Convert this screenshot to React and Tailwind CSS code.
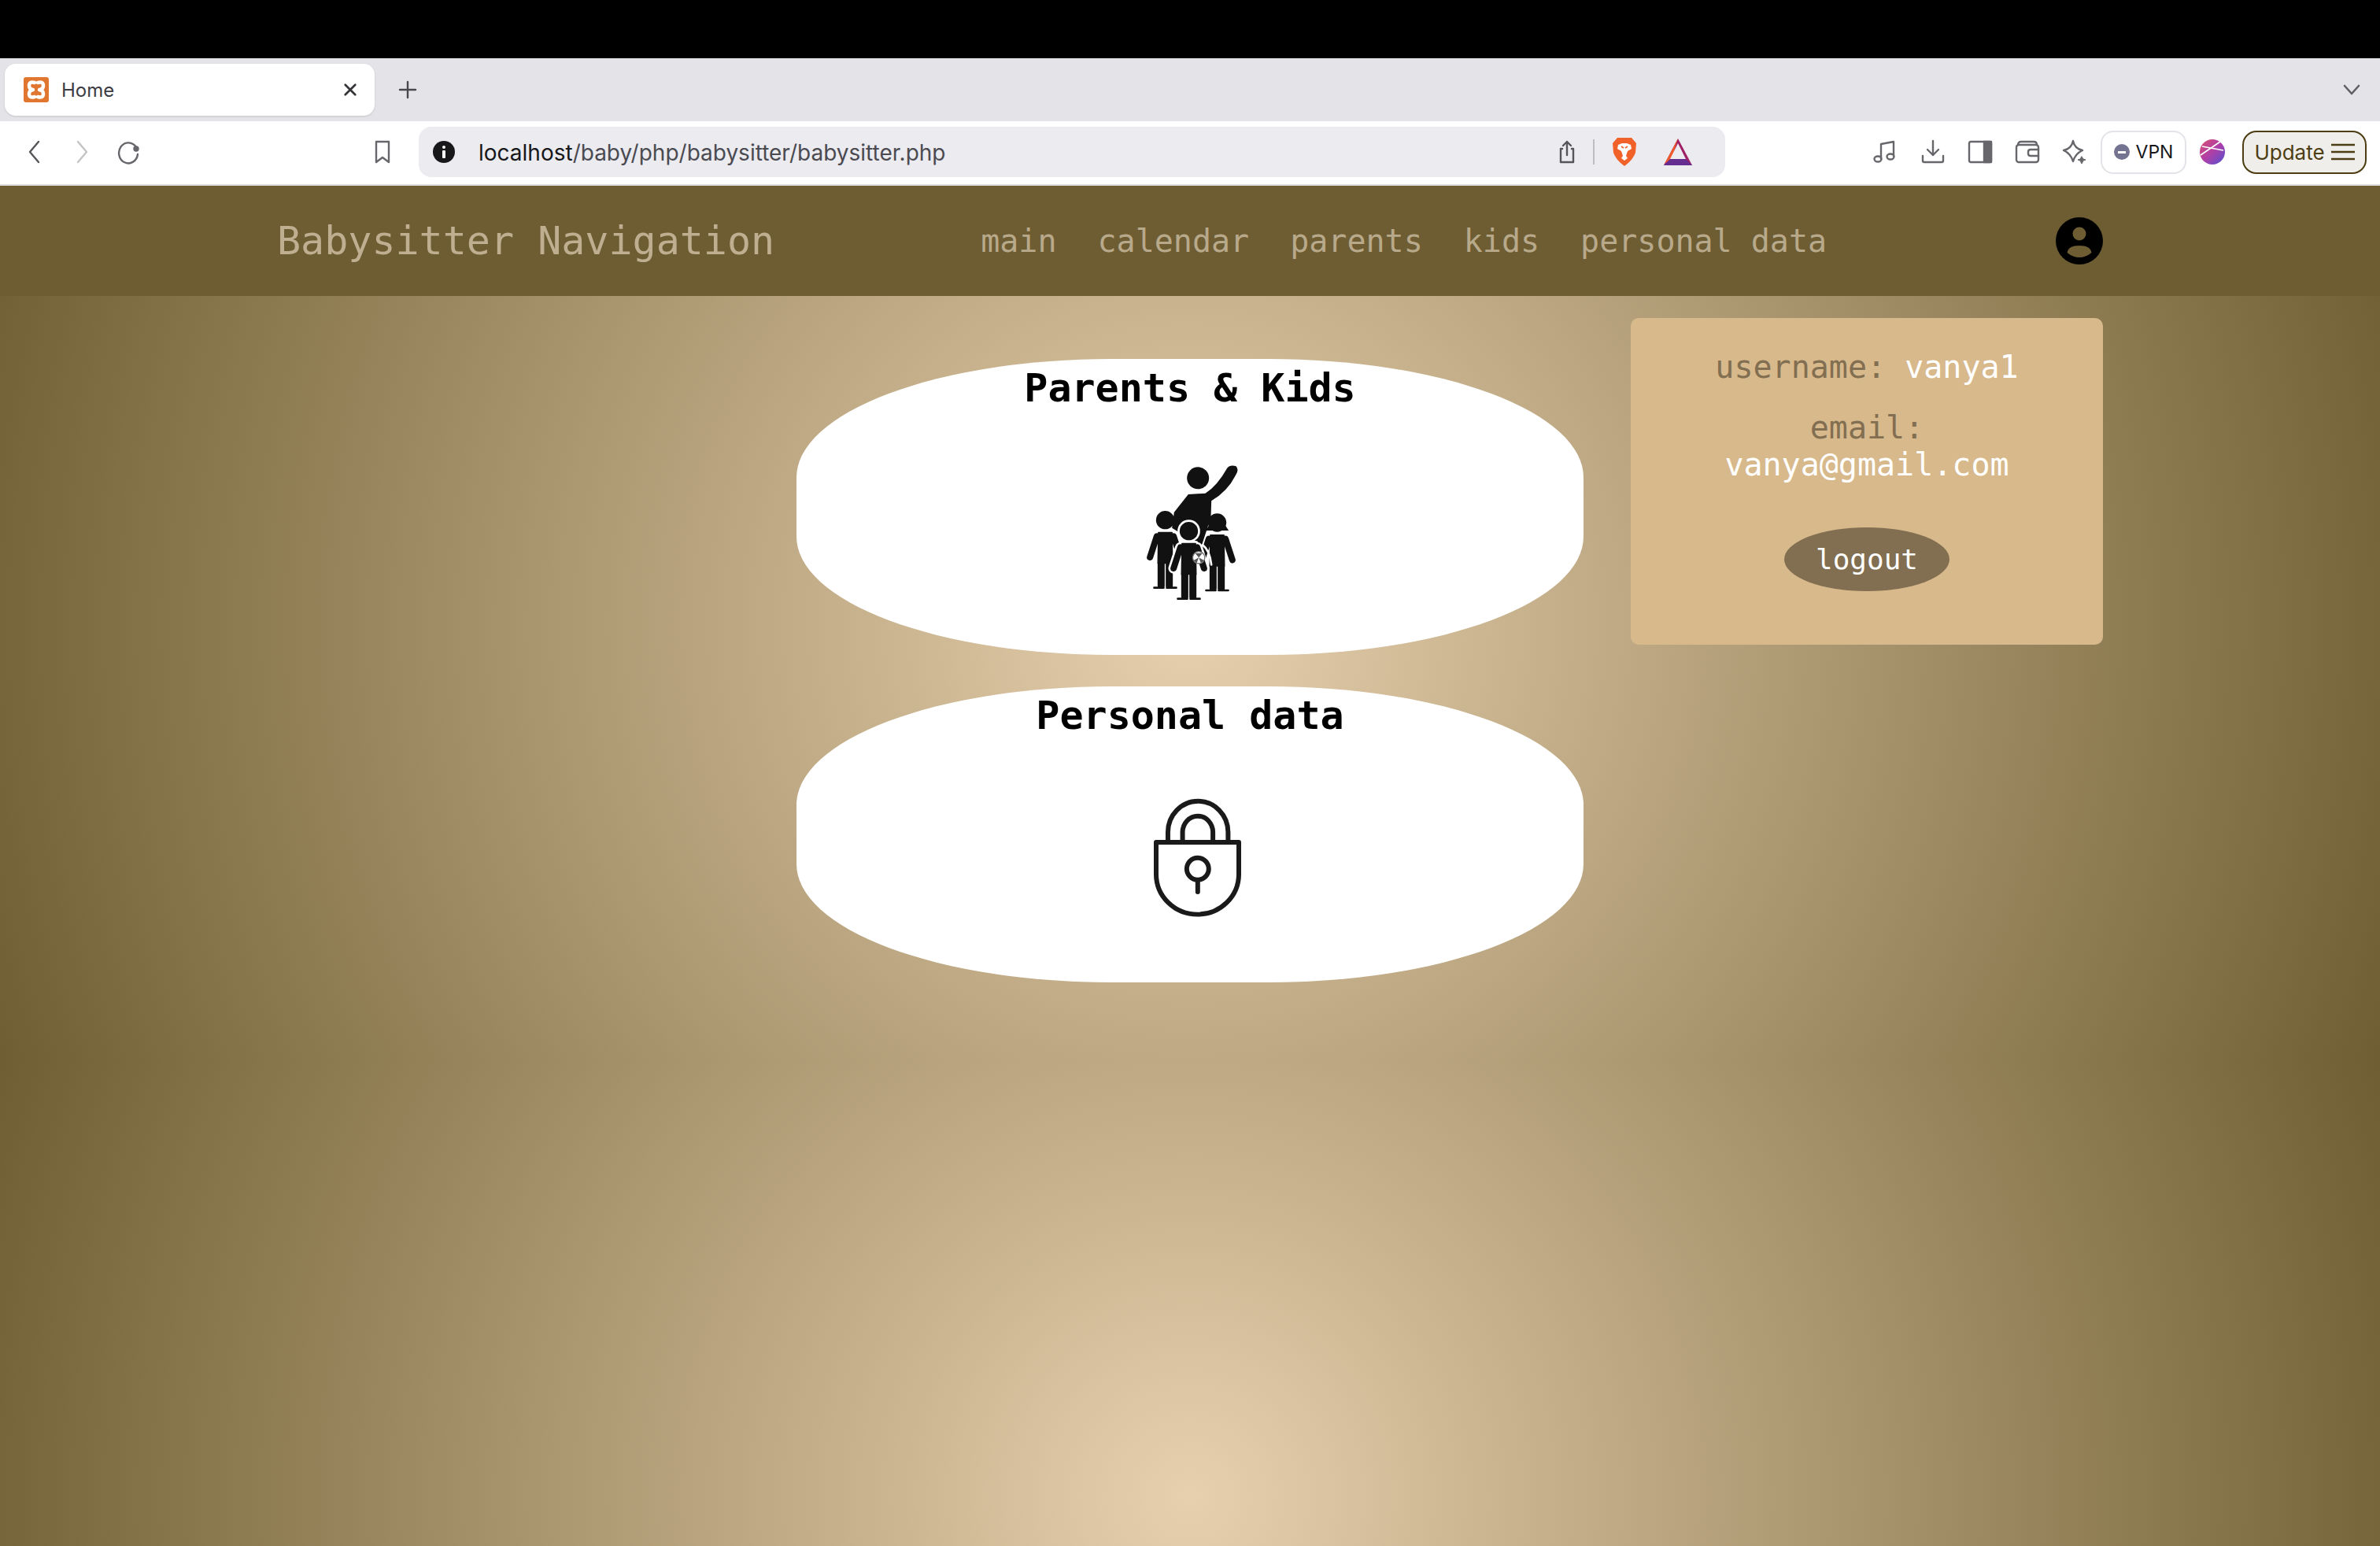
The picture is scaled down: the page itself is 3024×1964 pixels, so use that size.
import React from "react";

const mono = "font-['DejaVu_Sans_Mono',monospace]";
const ui = "font-['Inter',sans-serif]";

const Kid = ({ x, y, hair, outline }) => {
    const color = outline ? "#fff" : "#111";
    const extra = outline ? 16 : 0;
    return (
        <g transform={`translate(${x} ${y})`} fill={color} stroke={color} strokeLinecap="round" strokeLinejoin="round">
            <circle cx="0" cy="0" r={35} strokeWidth={extra} />
            {hair && (
                <path d="M-44 30 Q-36 18 -30 8 L30 8 Q36 18 44 30 Z" strokeWidth={extra} />
            )}
            <path d="M-26 47 H26 L28 165 H-28 Z" strokeWidth={extra + 4} />
            <path d="M-25 165 V252 H-6 V165 M25 165 V252 H6 V165" strokeWidth={extra + 8} />
            <path d="M-42 258 H-6 M42 258 H6" strokeWidth={extra + 8} fill="none" />
            <path d="M-32 62 L-58 142 M32 62 L58 142" strokeWidth={extra + 24} fill="none" />
        </g>
    );
};

const FamilyIcon = () => (
    <svg viewBox="166 58 356 516" className="w-[119px] h-[172px] ml-[5px] mt-[68px]">
        <circle cx="367" cy="110" r="42" fill="#111" />
        <path
            d="M330 172 L395 168 Q440 140 478 72 Q490 58 512 65 Q525 78 510 100 Q480 160 418 197 L416 260 L380 370 L300 320 L268 300 L276 240 Z"
            fill="#111"
        />
        <Kid x={242} y={270} />
        <Kid x={440} y={280} hair />
        <Kid x={332} y={312} outline />
        <Kid x={332} y={312} />
        <path d="M385 365 Q412 385 418 440" fill="none" stroke="#fff" strokeWidth="8" strokeLinecap="round" />
        <circle cx="370" cy="413" r="23" fill="#fff" stroke="#777" strokeWidth="4" />
        <path d="M370 413 L356 396 H384 Z M370 413 L350 424 L362 434 Z M370 413 L390 424 L378 434 Z" fill="#555" />
    </svg>
);

const LockIcon = () => (
    <svg
        viewBox="133 40 340 454"
        className="w-[113px] h-[151px] ml-[18px] mt-[76px]"
        fill="none"
        stroke="#1a1a1a"
        strokeWidth="18"
        strokeLinecap="round"
        strokeLinejoin="round"
    >
        <path d="M145 208 H461 V330 A158 154 0 0 1 145 330 Z" />
        <path d="M190 208 V170 A115 119 0 0 1 420 170 V208" />
        <path d="M246 208 V170 A58 62 0 0 1 362 170 V208" />
        <circle cx="304" cy="310" r="42" />
        <path d="M304 358 V398" />
    </svg>
);

const Avatar = () => (
    <svg viewBox="0 0 60 60" className="w-[60px] h-[60px] ml-auto">
        <circle cx="30" cy="30" r="30" fill="#000" />
        <circle cx="30" cy="21" r="8.5" fill="#6e5d33" />
        <path d="M14.5 45 Q16 36 30 36 Q44 36 45.5 45 Q38 51 30 51 Q22 51 14.5 45 Z" fill="#6e5d33" />
    </svg>
);

const Favicon = () => (
    <div className="w-[32px] h-[32px] rounded-[3px] bg-[#e0762f]">
        <svg viewBox="0 0 32 32" className="w-[32px] h-[32px]" fill="none" stroke="#fff" strokeWidth="4.5" strokeLinecap="round" strokeLinejoin="round">
            <path d="M14 7 Q7 5 7 11 Q7 15 12 16 Q7 17 7 21 Q7 27 14 25" />
            <path d="M18 7 Q25 5 25 11 Q25 15 20 16 Q25 17 25 21 Q25 27 18 25" />
        </svg>
    </div>
);

const Stroke = ({ className, children, width = 2.4, color = "#66666b" }) => (
    <svg viewBox="0 0 32 32" className={className} fill="none" stroke={color} strokeWidth={width} strokeLinecap="round" strokeLinejoin="round">
        {children}
    </svg>
);

const BraveLion = () => (
    <svg viewBox="0 0 32 38" className="w-[32px] h-[38px]">
        <path d="M7 1 H25 L31 8 L30 20 Q27 29 16 37 Q5 29 2 20 L1 8 Z" fill="#f1622b" />
        <path d="M8 10 L13 8 H19 L24 10 L25 15 L20 18 L18 24 L20 27 L16 30 L12 27 L14 24 L12 18 L7 15 Z" fill="#fff" />
        <path d="M12 12 L15 14 M20 12 L17 14" stroke="#f1622b" strokeWidth="1.6" />
    </svg>
);

const BatTriangle = () => (
    <svg viewBox="0 0 36 34" className="w-[36px] h-[34px]">
        <path d="M18 0 L0 34 H36 Z" fill="#9e1f63" />
        <path d="M18 0 L1 32 L10 26 Z" fill="#f0592b" />
        <path d="M18 6 L8 26 H28 Z" fill="#ebebf0" />
        <path d="M8 26 H28 L36 34 H0 Z" fill="#662d91" />
    </svg>
);

const BrowserChrome = () => (
    <>
        <div className="h-[74px] bg-black" />
        <div className="h-[80px] bg-[#e3e3e8] flex items-center relative">
            <div className="ml-[6px] w-[470px] h-[66px] rounded-[14px] bg-white shadow-sm flex items-center pl-[24px] pr-[22px]">
                <Favicon />
                <span className={`${ui} ml-[16px] pt-[2px] text-[24px] text-[#3c3c43]`}>Home</span>
                <svg viewBox="0 0 20 20" className="w-[18px] h-[18px] ml-auto" stroke="#333338" strokeWidth="3" strokeLinecap="round">
                    <path d="M3 3 L17 17 M17 3 L3 17" />
                </svg>
            </div>
            <svg viewBox="0 0 24 24" className="w-[24px] h-[24px] ml-[30px]" stroke="#48484d" strokeWidth="2.4" strokeLinecap="round">
                <path d="M12 2 V22 M2 12 H22" />
            </svg>
            <svg viewBox="0 0 22 14" className="w-[22px] h-[14px] ml-auto mr-[25px]" fill="none" stroke="#5f5f64" strokeWidth="2.6" strokeLinecap="round" strokeLinejoin="round">
                <path d="M2 2 L11 12 L20 2" />
            </svg>
        </div>
        <div className="h-[82px] bg-white border-b-2 border-[#dcdcdc] flex items-center pb-[2px]">
            <Stroke className="w-[32px] h-[32px] ml-[28px]" color="#55555a"><path d="M21 3 L10 16 L21 29" /></Stroke>
            <Stroke className="w-[32px] h-[32px] ml-[28px]" color="#c4c4c6"><path d="M11 3 L22 16 L11 29" /></Stroke>
            <Stroke className="w-[32px] h-[32px] ml-[28px]" color="#66666b">
                <path d="M25 10 A12 13 0 1 0 27 19" />
                <circle cx="25" cy="12" r="2.5" fill="#66666b" />
            </Stroke>
            <Stroke className="w-[32px] h-[32px] ml-[290px]" color="#66666b"><path d="M8 3 H24 V29 L16 23 L8 29 Z" /></Stroke>
            <div className="ml-[30px] w-[1660px] h-[64px] rounded-[16px] bg-[#ebebf0] flex items-center pl-[18px]">
                <div className="w-[28px] h-[28px] rounded-full bg-[#18181b] flex flex-col items-center justify-center gap-[2px]">
                    <span className="w-[4px] h-[4px] bg-white rounded-full" />
                    <span className="w-[4px] h-[10px] bg-white rounded-[1px]" />
                </div>
                <span className={`${ui} ml-[30px] pt-[1px] text-[28px] text-[#4a4a50]`}>
                    <span className="text-[#17171a]">localhost</span>/baby/php/babysitter/babysitter.php
                </span>
                <Stroke className="w-[32px] h-[36px] ml-auto" color="#55555a">
                    <path d="M16 20 V3 M11 8 L16 3 L21 8 M10 12 H8 V29 H24 V12 H22" />
                </Stroke>
                <div className="w-[2px] h-[32px] bg-[#bdbdc2] ml-[17px]" />
                <div className="ml-[22px]"><BraveLion /></div>
                <div className="ml-[34px] mr-[42px]"><BatTriangle /></div>
            </div>
            <Stroke className="w-[32px] h-[32px] ml-[188px]">
                <path d="M10 25 V6 L26 3 V21" />
                <ellipse cx="6" cy="25" rx="4.5" ry="3.5" />
                <ellipse cx="22" cy="22" rx="4.5" ry="3.5" />
            </Stroke>
            <Stroke className="w-[32px] h-[32px] ml-[28px]">
                <path d="M16 2 V20 M9 13 L16 20 L23 13 M3 21 V27 Q3 29 5 29 H27 Q29 29 29 27 V21" />
            </Stroke>
            <Stroke className="w-[32px] h-[32px] ml-[28px]">
                <rect x="2" y="3" width="28" height="26" rx="2" />
                <rect x="21" y="3" width="9" height="26" fill="#66666b" />
            </Stroke>
            <Stroke className="w-[32px] h-[32px] ml-[28px]">
                <path d="M4 7 Q4 3 8 3 H24 Q28 3 28 7" />
                <rect x="2" y="7" width="28" height="22" rx="3" />
                <path d="M30 13 H20 Q17 13 17 16 V18 Q17 21 20 21 H30" />
            </Stroke>
            <Stroke className="w-[32px] h-[32px] ml-[28px]">
                <path d="M14 2 Q16 12 26 14 Q17 18 14 28 Q11 18 2 14 Q12 12 14 2 Z" />
                <path d="M25 22 L27 25 L30 26 L27 27 L25 31 L23 27 L20 26 L23 25 Z" fill="#66666b" strokeWidth="1" />
            </Stroke>
            <div className="ml-[17px] w-[109px] h-[55px] rounded-[16px] border-2 border-[#e3e3e8] flex items-center justify-center gap-[8px]">
                <div className="w-[20px] h-[20px] rounded-full bg-[#747490] flex items-center justify-center">
                    <span className="w-[10px] h-[3px] bg-white" />
                </div>
                <span className={`${ui} pt-[1px] text-[23px] text-[#17171a]`}>VPN</span>
            </div>
            <svg viewBox="0 0 32 32" className="w-[32px] h-[32px] ml-[17px]">
                <defs>
                    <linearGradient id="bubble" x1="0" y1="0" x2="1" y2="1">
                        <stop offset="0" stopColor="#d8506f" />
                        <stop offset="0.5" stopColor="#b040a8" />
                        <stop offset="1" stopColor="#5050d0" />
                    </linearGradient>
                </defs>
                <circle cx="16" cy="16" r="16" fill="url(#bubble)" />
                <path d="M3 9 L30 14 M26 3 L1 20" stroke="#fff" strokeWidth="1.6" />
            </svg>
            <div className="ml-[22px] w-[158px] h-[55px] rounded-[18px] border-2 border-[#4d3d12] bg-[#efeeeb] flex items-center justify-center gap-[8px]">
                <span className={`${ui} pt-[1px] text-[26px] text-[#4d3d12]`}>Update</span>
                <svg viewBox="0 0 30 24" className="w-[30px] h-[24px]" stroke="#4d3d12" strokeWidth="2.4">
                    <path d="M0 3 H30 M0 12 H30 M0 21 H30" />
                </svg>
            </div>
        </div>
    </>
);

const OvalCard = ({ title, children }) => (
    <section className="w-[1000px] h-[376px] rounded-[40%] bg-white flex flex-col items-center pt-[8px]">
        <h2 className={`${mono} text-[50px] leading-[58px] font-bold text-black`}>{title}</h2>
        {children}
    </section>
);

const App = () => (
    <div className="w-[3024px] h-[1964px] overflow-hidden flex flex-col">
        <BrowserChrome />
        <div className={`${mono} flex-1 bg-[radial-gradient(circle,#e7d0ae,#6f5e33)] bg-[length:100%_1110px]`}>
            <nav className="h-[140px] bg-[#6e5d33] px-[352px] flex items-center">
                <span className="text-[50px] text-[#bfae90]">Babysitter Navigation</span>
                <div className="ml-[262px] flex gap-[52px] text-[40px] text-[#b8a98b]">
                    <a>main</a>
                    <a>calendar</a>
                    <a>parents</a>
                    <a>kids</a>
                    <a>personal data</a>
                </div>
                <Avatar />
            </nav>
            <main className="px-[352px] pt-[28px] flex justify-end items-start gap-[60px]">
                <div className="pt-[52px] flex flex-col gap-[40px]">
                    <OvalCard title="Parents & Kids">
                        <FamilyIcon />
                    </OvalCard>
                    <OvalCard title="Personal data">
                        <LockIcon />
                    </OvalCard>
                </div>
                <aside className="w-[600px] h-[415px] rounded-[10px] bg-[#d7b98c] px-[50px] pt-[39px] flex flex-col items-center text-center text-[40px] leading-[47px] text-[#826e50]">
                    <p>username: <span className="text-white">vanya1</span></p>
                    <p className="mt-[30px]">email: <span className="text-white">vanya@gmail.com</span></p>
                    <button className={`${mono} mt-[56px] w-[210px] h-[81px] rounded-[50%] bg-[#826e50] text-white text-[36px]`}>logout</button>
                </aside>
            </main>
        </div>
    </div>
);

export default App;
